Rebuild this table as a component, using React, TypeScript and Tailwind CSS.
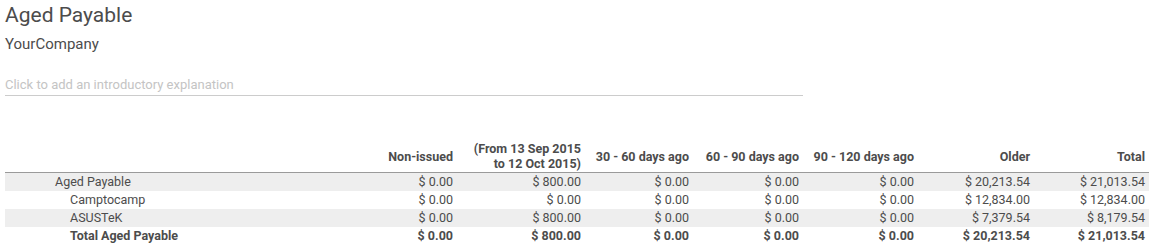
const rows = [
  { name: "Aged Payable", indent: "pl-[50px]", bold: false, shade: true, vals: ["$ 0.00", "$ 800.00", "$ 0.00", "$ 0.00", "$ 0.00", "$ 20,213.54", "$ 21,013.54"] },
  { name: "Camptocamp", indent: "pl-[65px]", bold: false, shade: false, vals: ["$ 0.00", "$ 0.00", "$ 0.00", "$ 0.00", "$ 0.00", "$ 12,834.00", "$ 12,834.00"] },
  { name: "ASUSTeK", indent: "pl-[65px]", bold: false, shade: true, vals: ["$ 0.00", "$ 800.00", "$ 0.00", "$ 0.00", "$ 0.00", "$ 7,379.54", "$ 8,179.54"] },
  { name: "Total Aged Payable", indent: "pl-[65px]", bold: true, shade: false, vals: ["$ 0.00", "$ 800.00", "$ 0.00", "$ 0.00", "$ 0.00", "$ 20,213.54", "$ 21,013.54"] },
];

const App = () => {
  return (
    <div className="h-[249px] w-[1149px] overflow-hidden bg-white pl-[5px] font-['Roboto',sans-serif] text-[#4c4c4c]">
      <h1 className="pt-[2px] text-[21px] leading-[26px]">Aged Payable</h1>
      <div className="mt-[7px] text-[15px] leading-[18px]">YourCompany</div>
      <div className="mt-[24px] w-[798px] border-b border-[#cccccc] pb-[2px] text-[13px] leading-[16px] text-[#c4c4c4]">
        Click to add an introductory explanation
      </div>
      <table className="mt-[44px] w-[1144px] table-fixed border-collapse text-[12.5px]">
        <thead>
          <tr className="border-b border-[#9a9a9a] font-bold">
            <th className="w-[367px]"></th>
            <th className="w-[85px] pt-[1px] pb-[1px] pr-[4px] text-right align-middle leading-[15px]">Non-issued</th>
            <th className="w-[128px] pt-[1px] pb-[1px] pr-[4px] text-right align-middle leading-[15px]">
              (From 13 Sep 2015
              <br />
              to 12 Oct 2015)
            </th>
            <th className="w-[108px] pt-[1px] pb-[1px] pr-[4px] text-right align-middle leading-[15px]">30 - 60 days ago</th>
            <th className="w-[110px] pt-[1px] pb-[1px] pr-[4px] text-right align-middle leading-[15px]">60 - 90 days ago</th>
            <th className="w-[115px] pt-[1px] pb-[1px] pr-[4px] text-right align-middle leading-[15px]">90 - 120 days ago</th>
            <th className="w-[116px] pt-[1px] pb-[1px] pr-[4px] text-right align-middle leading-[15px]">Older</th>
            <th className="w-[115px] pt-[1px] pb-[1px] pr-[4px] text-right align-middle leading-[15px]">Total</th>
          </tr>
        </thead>
        <tbody>
          {rows.map((row) => (
            <tr key={row.name} className={`h-[18px] leading-[18px] ${row.shade ? "bg-[#eeeeee]" : ""} ${row.bold ? "font-bold" : ""}`}>
              <td className={`${row.indent} text-left`}>{row.name}</td>
              {row.vals.map((v, i) => (
                <td key={i} className="pr-[4px] text-right">
                  {v}
                </td>
              ))}
            </tr>
          ))}
        </tbody>
      </table>
    </div>
  );
};

export default App;
